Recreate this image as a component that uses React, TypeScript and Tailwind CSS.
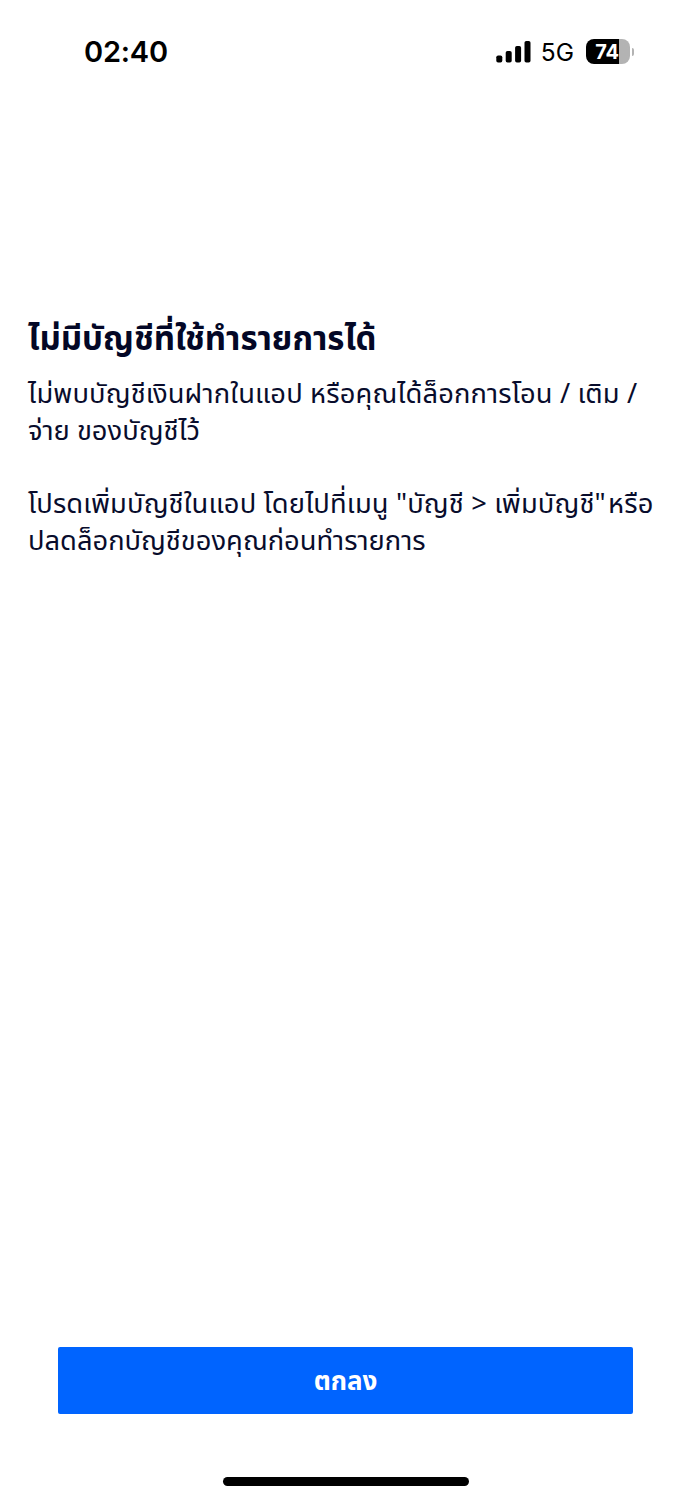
import { clsx } from "clsx";
import type { ReactNode } from "react";

const THAI = "[font-family:'Noto_Sans_Thai','Noto_Sans',sans-serif]";

interface LineProps {
  children: ReactNode;
  className?: string;
}

function Line({ children, className = "" }: LineProps) {
  return (
    <span className={clsx("block w-fit whitespace-pre", className)}>{children}</span>
  );
}

function StatusBar() {
  return (
    <header className="flex h-[103px] items-center justify-between pr-[57px] pl-[84px] text-black [font-family:'Inter',sans-serif]">
      <div className="text-[29px] leading-none font-semibold tracking-[-0.2px]">02:40</div>
      <div className="flex items-center">
        <svg className="h-[22px] w-[35px]" viewBox="0 0 35 22" fill="currentColor">
          <rect x="0.3" y="14.5" width="6" height="7" rx="1.8" />
          <rect x="9.7" y="10" width="6" height="11.5" rx="1.8" />
          <rect x="19.1" y="5" width="6" height="16.5" rx="1.8" />
          <rect x="28.5" y="0" width="6" height="21.5" rx="1.8" />
        </svg>
        <div className="mt-[2px] ml-[10px] text-[24.5px] leading-none">5G</div>
        <div className="ml-3 flex h-[25px] w-[44px] items-center justify-center rounded-lg bg-linear-to-r from-black from-76% to-[#b3b3b3] to-76% pr-[2px] text-[20px] leading-none font-bold tracking-[-0.3px] text-white">
          74
        </div>
        <div className="ml-[2px] h-2 w-[2px] rounded-r-full bg-[#b3b3b3]" />
      </div>
    </header>
  );
}

export default function App() {
  return (
    <div className="flex h-[1500px] w-[691px] flex-col overflow-hidden bg-white">
      <StatusBar />
      <main className={clsx("flex-1 pt-[215px] pl-7 text-[#080c2c]", THAI)}>
        <h1 className="text-[33px] leading-[44px] font-bold text-[#030726]">
          <Line>ไม่มีบัญชีที่ใช้ทำรายการได้</Line>
        </h1>
        <p className="mt-[15px] text-[27.3px] leading-[36.7px]">
          <Line className="tracking-[0.14px]">
            ไม่พบบัญชีเงินฝากในแอป หรือคุณได้ล็อกการโอน / เติม /
          </Line>
          <Line>จ่าย ของบัญชีไว้</Line>
        </p>
        <p className="mt-[37px] text-[27.3px] leading-[36.7px]">
          <Line className="tracking-[0.14px]">
            โปรดเพิ่มบัญชีในแอป โดยไปที่เมนู "บัญชี &gt; เพิ่มบัญชี"
            <span className="ml-[-5px]"> หรือ</span>
          </Line>
          <Line>ปลดล็อกบัญชีของคุณก่อนทำรายการ</Line>
        </p>
      </main>
      <footer className="flex h-[153.4px] flex-col items-center">
        <button
          className={clsx(
            "h-[67px] w-[575px] rounded-[2px] bg-[#0064ff] pt-1 text-[26px] font-bold text-white",
            THAI,
          )}
        >
          ตกลง
        </button>
        <div className="mt-[63px] h-[9px] w-[246px] rounded-full bg-black" />
      </footer>
    </div>
  );
}
